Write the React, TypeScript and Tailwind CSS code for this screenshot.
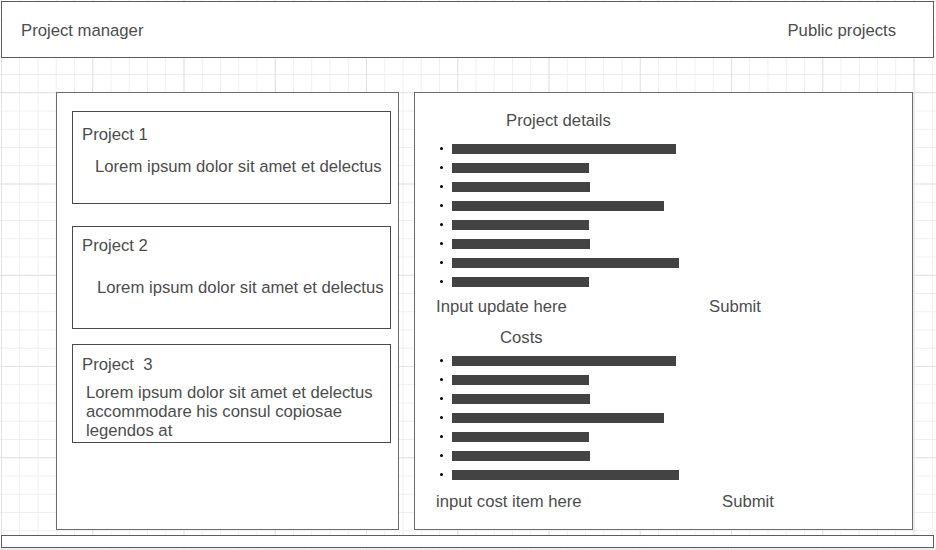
const detailBars = [224, 137, 138, 212, 137, 138, 227, 137];
const costBars = [224, 137, 138, 212, 137, 138, 227];

function BarList({ widths }: { widths: number[] }) {
  return (
    <ul className="flex flex-col">
      {widths.map((w, i) => (
        <li key={i} className="h-[19px] flex items-center pl-[25px]">
          <span className="w-[3px] h-[3px] rounded-full bg-black" />
          <span className="ml-[9px] h-[10px] bg-[#434343]" style={{ width: w }} />
        </li>
      ))}
    </ul>
  );
}

function InputRow({ placeholder, labelWidth }: { placeholder: string; labelWidth: string }) {
  return (
    <div className="flex pl-[21px]">
      <span className={labelWidth}>{placeholder}</span>
      <span>Submit</span>
    </div>
  );
}

export default function App() {
  return (
    <div className="w-[936px] h-[550px] overflow-hidden bg-white bg-[linear-gradient(to_right,#e2e2e2_1px,transparent_1px),linear-gradient(to_bottom,#e2e2e2_1px,transparent_1px),linear-gradient(to_right,#efefef_1px,transparent_1px),linear-gradient(to_bottom,#efefef_1px,transparent_1px)] bg-[size:91.25px_91.25px,91.25px_91.25px,18.25px_18.25px,18.25px_18.25px] bg-[position:1px_1px] pt-[1px] pl-[1px] font-['Liberation_Sans',Arial,sans-serif] text-[16.7px] leading-[19px] text-[#4d4d4d]">
      <header className="w-[933px] h-[57px] border border-[#5c5c5c] bg-white flex items-center justify-between pt-[2px] pl-[19px] pr-[37px]">
        <span>Project manager</span>
        <span>Public projects</span>
      </header>

      <main className="flex gap-[15px] pl-[55px] mt-[34px]">
        {/* project list */}
        <section className="w-[343px] h-[438px] border border-[#6b6b6b] bg-white pt-[18px] pl-[15px]">
          <div className="w-[319px] h-[93px] border border-[#4a4a4a] pt-[13px]">
            <div className="pl-[9px]">Project 1</div>
            <div className="pl-[22px] mt-[13px]">Lorem ipsum dolor sit amet et delectus</div>
          </div>
          <div className="w-[319px] h-[103px] border border-[#4a4a4a] mt-[22px] pt-[9px]">
            <div className="pl-[9px]">Project 2</div>
            <div className="pl-[24px] mt-[23px]">Lorem ipsum dolor sit amet et delectus</div>
          </div>
          <div className="w-[319px] h-[99px] border border-[#4a4a4a] mt-[15px] pt-[10px]">
            <div className="pl-[9px] whitespace-pre">Project  3</div>
            <div className="pl-[13px] mt-[9px]">
              Lorem ipsum dolor sit amet et delectus
              <br />
              accommodare his consul copiosae
              <br />
              legendos at
            </div>
          </div>
        </section>

        {/* details */}
        <section className="w-[499px] h-[438px] border border-[#6b6b6b] bg-white pt-[18px]">
          <div className="pl-[91px]">Project details</div>
          <div className="mt-[9px]">
            <BarList widths={detailBars} />
          </div>
          <div className="mt-[6px]">
            <InputRow placeholder="Input update here" labelWidth="w-[273px]" />
          </div>
          <div className="pl-[85px] mt-[12px]">Costs</div>
          <div className="mt-[4px]">
            <BarList widths={costBars} />
          </div>
          <div className="mt-[8px]">
            <InputRow placeholder="input cost item here" labelWidth="w-[286px]" />
          </div>
        </section>
      </main>

      <footer className="w-[933px] h-[13px] mt-[5px] border border-[#5c5c5c] bg-white" />
    </div>
  );
}
